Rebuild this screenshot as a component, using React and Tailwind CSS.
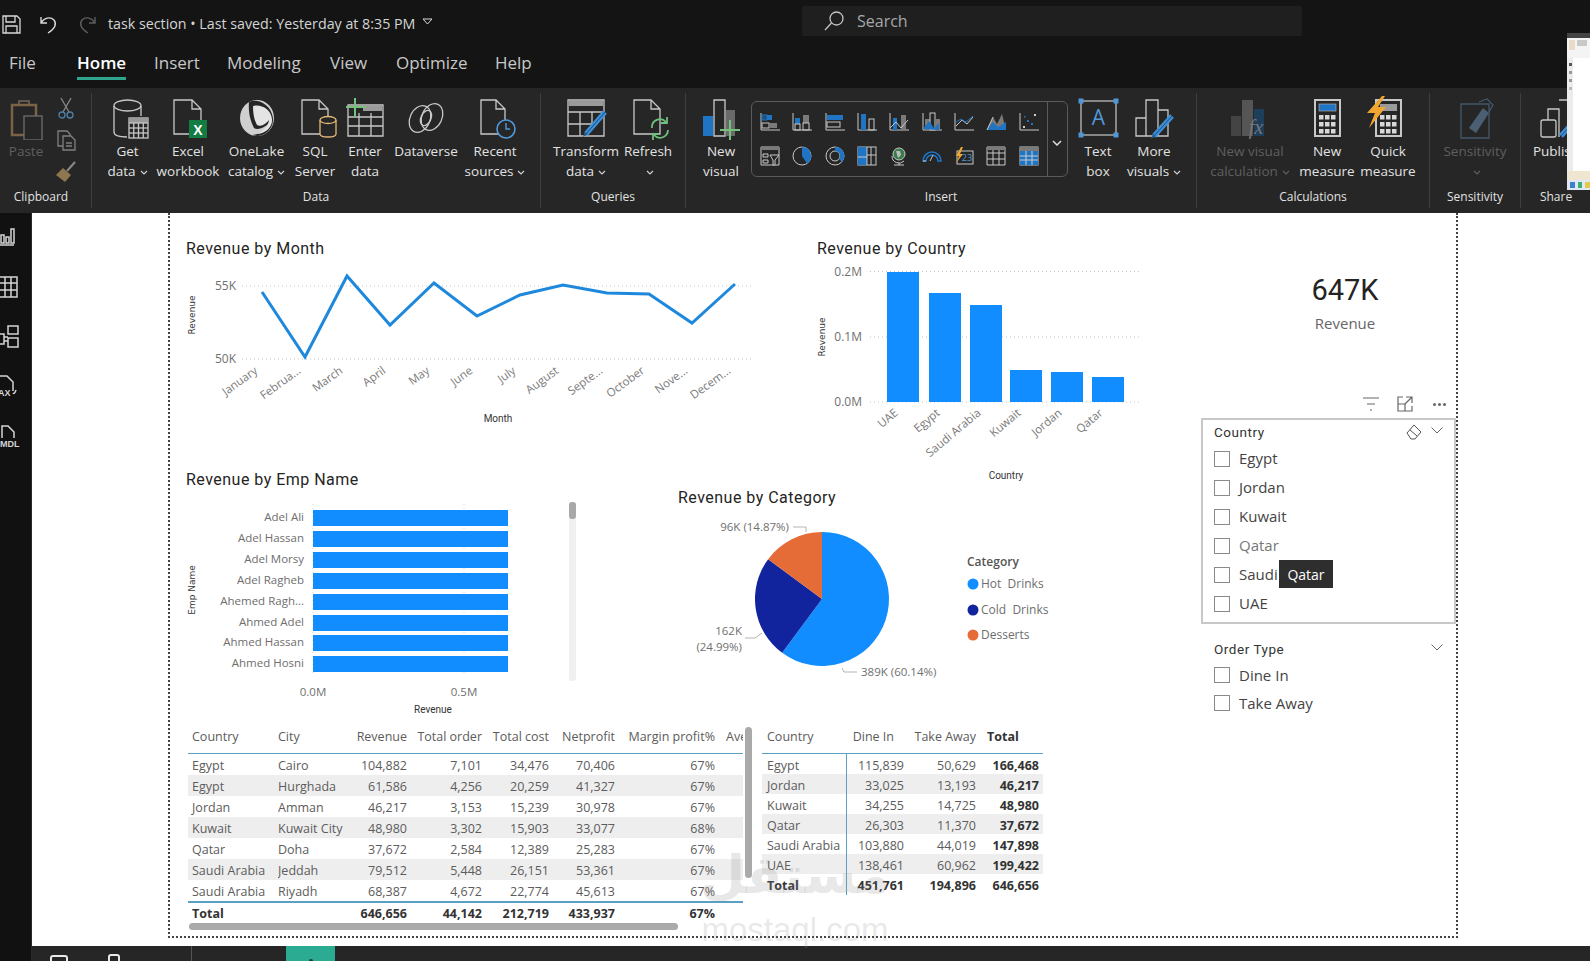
import React from "react";

const G = "#c8c8c8";
const SANS = "'Open Sans',sans-serif";
const DIN = "Roboto,sans-serif";

const Ic = ({ children, s = 44, vb, sw = 1.3, stroke = G, className = "" }) => (
  <svg width={s} height={s} viewBox={vb || `0 0 ${s} ${s}`} fill="none" stroke={stroke} strokeWidth={sw} className={"shrink-0 " + className}>
    {children}
  </svg>
);

const CalcGrid = ({ x, y, w, h, c = 4, r = 4 }) => (
  <g>
    <rect x={x} y={y} width={w} height={h} fill="#262626" />
    <rect x={x} y={y} width={w} height={h / r} fill="#9a9a9a" stroke="none" />
    {Array.from({ length: c - 1 }).map((_, i) => (
      <path key={i} d={`M${x + ((i + 1) * w) / c} ${y + h / r}V${y + h}`} />
    ))}
    {Array.from({ length: r - 1 }).map((_, i) => (
      <path key={i} d={`M${x} ${y + ((i + 1) * h) / r}H${x + w}`} />
    ))}
  </g>
);

const DocP = ({ x, y, w, h, f = 9, stroke = G }) => (
  <path stroke={stroke} d={`M${x} ${y}h${w - f}l${f} ${f}v${h - f}h${-w}z M${x + w - f} ${y}v${f}h${f}`} />
);

const Pencil = ({ x1, y1, x2, y2, color = "#3d8fd8" }) => (
  <g>
    <path d={`M${x1} ${y1}L${x2} ${y2}`} stroke={color} strokeWidth="5" />
    <path d={`M${x1} ${y1}L${x2} ${y2}`} stroke="#1b4f80" strokeWidth="1" />
  </g>
);

const IPaste = () => (
  <Ic>
    <path d="M8 9h24v30H8z" stroke="#7b6443" strokeWidth="2.5" />
    <path d="M15 9V5h10v4" stroke="#77685a" strokeWidth="1.5" />
    <rect x="20" y="20" width="18" height="24" fill="#262626" stroke="#6e6e6e" />
  </Ic>
);
const ICut = () => (
  <Ic s={22} vb="0 0 22 22">
    <path d="M6 1l8 14M16 1L8 15" stroke="#8a8a8a" />
    <circle cx="7" cy="18" r="3" stroke="#4d7ea8" />
    <circle cx="15" cy="18" r="3" stroke="#4d7ea8" />
  </Ic>
);
const ICopy = () => (
  <Ic s={22} vb="0 0 22 22" stroke="#808080">
    <path d="M3 2h9l3 3v12H3z" />
    <path d="M8 7h8l4 4v10H8z" fill="#262626" />
    <path d="M11 14h6M11 17h6" />
  </Ic>
);
const IBrush = () => (
  <Ic s={22} vb="0 0 22 22">
    <path d="M20 1L12 10" stroke="#8a8a8a" strokeWidth="2" />
    <path d="M8 7l8 7-6 7-9-7z" fill="#8d7650" stroke="none" />
  </Ic>
);

const IGet = () => (
  <Ic>
    <path d="M8 10v26c0 3 5 5 13 5M35 10v10" />
    <ellipse cx="21.5" cy="9.5" rx="13.5" ry="5.5" />
    <CalcGrid x={23} y={22} w={19} h={20} />
  </Ic>
);
const IExcel = () => (
  <Ic>
    <DocP x={8} y={4} w={27} h={34} />
    <rect x="23" y="24" width="18" height="18" fill="#127c43" stroke="none" />
    <text x="32" y="38.5" textAnchor="middle" fill="#fff" stroke="none" fontSize="14" fontWeight="700" fontFamily="Liberation Sans">X</text>
  </Ic>
);
const IOneLake = () => (
  <Ic>
    <ellipse cx="22" cy="22" rx="17" ry="18" fill="#cfcfcf" stroke="none" />
    <path d="M14 6c8-4 22 2 24 16 1 12-11 21-21 17 8-1 14-4 18-13-6 7-13 8-16 6-3-6-6-14-5-26z" fill="#262626" stroke="none" />
    <path d="M18 10c8-2 18 3 19 13 1 9-8 15-15 15 6-3 11-7 12-14-4 5-9 7-12 5-3-5-4-12-4-19z" fill="#e4e4e4" stroke="none" />
  </Ic>
);
const ISql = () => (
  <Ic>
    <DocP x={9} y={4} w={26} h={34} />
    <path d="M27 24v14c0 2 3 3 8 3s8-1 8-3V24" fill="#262626" stroke="#e6b877" />
    <ellipse cx="35" cy="24" rx="8" ry="3.5" fill="#262626" stroke="#e6b877" />
  </Ic>
);
const IEnter = () => (
  <Ic>
    <path d="M5 9h35v31H5zM5 21h35M5 30h35M16 17v23M28 17v23" />
    <rect x="20" y="10" width="19" height="5" fill="#9a9a9a" stroke="none" />
    <path d="M12 2v19M3 11h20" stroke="#74c27c" strokeWidth="2" />
  </Ic>
);
const IDataverse = () => (
  <Ic>
    <ellipse cx="16" cy="23" rx="10" ry="14" transform="rotate(25 16 23)" />
    <ellipse cx="28" cy="21" rx="10" ry="14" transform="rotate(25 28 21)" />
    <ellipse cx="22" cy="22" rx="5" ry="8" transform="rotate(25 22 22)" />
  </Ic>
);
const IRecent = () => (
  <Ic>
    <DocP x={8} y={4} w={24} h={34} />
    <circle cx="33" cy="33" r="9" fill="#262626" stroke="#4f98d8" strokeWidth="1.6" />
    <path d="M33 27v6h4" stroke="#4f98d8" strokeWidth="1.4" />
  </Ic>
);
const ITransform = () => (
  <Ic>
    <path d="M4 4h36v36H4zM4 16h36M4 28h24M16 16v24M28 16v14" />
    <rect x="5" y="5" width="34" height="5" fill="#9a9a9a" stroke="none" />
    <Pencil x1={41} y1={16} x2={22} y2={38} />
    <path d="M19 41l2-5 3 2z" fill="#1f5f9c" stroke="none" />
  </Ic>
);
const IRefresh = () => (
  <Ic>
    <DocP x={8} y={4} w={26} h={34} />
    <path d="M26 32a8 8 0 0 1 14-6m2 8a8 8 0 0 1-14 5" stroke="#6ec17c" strokeWidth="1.8" fill="none" />
    <path d="M41 21v6h-6M27 44v-6h6" stroke="#6ec17c" strokeWidth="1.8" />
  </Ic>
);
const INewVisual = () => (
  <Ic>
    <rect x="4" y="20" width="10" height="20" fill="#1f74c4" stroke="none" />
    <path d="M15 4h11v36H15z" />
    <rect x="27" y="14" width="9" height="26" fill="#6a6a6a" stroke="none" />
    <path d="M31 24v20M21 34h20" stroke="#74c27c" strokeWidth="2" />
  </Ic>
);
const ITextBox = () => (
  <Ic>
    <rect x="5" y="5" width="35" height="34" strokeWidth="1.2" />
    {[[5, 5], [40, 5], [5, 39], [40, 39]].map(([x, y]) => (
      <rect key={x + "" + y} x={x - 2.5} y={y - 2.5} width="5" height="5" fill="#4f98d8" stroke="none" />
    ))}
    <text x="22.5" y="29" textAnchor="middle" fill="#4f98d8" stroke="none" fontSize="21" fontFamily="Open Sans">A</text>
  </Ic>
);
const IMore = () => (
  <Ic>
    <path d="M4 22h10v18H4zM14 4h12v36H14zM26 14h10v26H26z" />
    <Pencil x1={40} y1={20} x2={22} y2={40} />
    <path d="M19 43l2-5 3 2z" fill="#1f5f9c" stroke="none" />
  </Ic>
);
const IFx = () => (
  <Ic>
    <rect x="3" y="20" width="10" height="20" fill="#444" stroke="none" />
    <rect x="14" y="4" width="11" height="36" fill="#555" stroke="none" />
    <rect x="26" y="13" width="10" height="27" fill="#1e3f5c" stroke="none" />
    <text x="28" y="38" textAnchor="middle" fill="#777" stroke="none" fontSize="20" fontStyle="italic" fontFamily="Liberation Serif">fx</text>
  </Ic>
);
const Calc = ({ bolt }) => (
  <Ic>
    <rect x="10" y="4" width="25" height="36" strokeWidth="2" />
    {bolt ? (
      <rect x="14" y="8" width="17" height="7" fill="#9a9a9a" stroke="none" />
    ) : (
      <rect x="14" y="8" width="17" height="7" fill="#1f74c4" stroke="#aaa" strokeWidth=".7" />
    )}
    {[19, 26, 33].map((y) =>
      [14, 20, 26].map((x) => <rect key={x + "," + y} x={x} y={y} width="4.5" height="4.5" fill="#d8d8d8" stroke="none" />)
    )}
    {bolt && <path d="M16 0L1 17h8L3 32 20 11h-8l7-11z" fill="#f0a732" stroke="none" />}
  </Ic>
);
const ISens = () => (
  <Ic stroke="#44586b">
    <path d="M8 8h28v34H8z" />
    <path d="M16 32l14-20 6 5-13 20z" fill="#4a5f72" stroke="none" />
    <path d="M26 6l8-3 6 6-4 7" />
  </Ic>
);
const IPublish = () => (
  <Ic>
    <rect x="7" y="24" width="15" height="17" rx="2" />
    <path d="M14 24V13h11v28M25 4h12v36" />
    <Pencil x1={43} y1={22} x2={27} y2={40} />
  </Ic>
);

const GI = ({ children }) => (
  <Ic s={20} sw={1} vb="0 0 20 20">
    {children}
  </Ic>
);
const BL = "#1f74c4";
const GY = "#7a7a7a";
const gallery = [
  <GI key="a"><path d="M1 1v17h19" /><rect x="2" y="3" width="5" height="5" stroke={BL} fill="#1f4d78" /><rect x="7" y="3" width="5" height="5" fill={BL} stroke="none" /><rect x="2" y="11" width="7" height="5" /><rect x="9" y="11" width="8" height="5" fill={GY} stroke="none" /></GI>,
  <GI key="b"><path d="M1 1v17h19" /><rect x="3" y="6" width="5" height="6" fill={BL} stroke="none" /><rect x="3" y="12" width="5" height="6" /><rect x="11" y="3" width="6" height="8" fill={GY} stroke="none" /><rect x="11" y="11" width="6" height="7" /></GI>,
  <GI key="c"><path d="M1 1v17h19" /><rect x="2" y="3" width="16" height="5" fill={BL} stroke="none" /><rect x="2" y="10" width="13" height="5" /></GI>,
  <GI key="d"><path d="M1 18h19M1 1v17" /><rect x="4" y="2" width="5" height="16" fill={BL} stroke="none" /><rect x="12" y="7" width="5" height="11" /></GI>,
  <GI key="e"><path d="M1 1v17h19" /><rect x="4" y="6" width="4" height="12" fill={BL} stroke="none" /><rect x="12" y="3" width="5" height="15" fill={GY} stroke="none" /><path d="M1 16l6-6 5 6 7-8" /></GI>,
  <GI key="f"><path d="M1 18h19M1 1v17" /><rect x="3" y="7" width="5" height="11" fill={GY} stroke="none" /><rect x="8" y="1" width="5" height="17" /><rect x="13" y="7" width="5" height="11" fill={GY} stroke="none" /><path d="M1 17l6-8 5 7 5-5v7z" fill={BL} stroke="none" /></GI>,
  <GI key="g"><path d="M1 1v17h19" /><path d="M2 14l6-6 5 4 6-7" /><path d="M2 10l5-3 5 3 7-6" stroke={BL} /></GI>,
  <GI key="h"><path d="M1 18l6-13 4 7 5-10 4 16z" fill={GY} stroke="none" /><path d="M1 18l6-8 5 5 8-5v8z" fill={BL} stroke="none" /><path d="M7 5l-6 13" /></GI>,
  <GI key="i"><path d="M1 1v17h19" /><g fill="#ccc" stroke="none"><rect x="4" y="14" width="2" height="2" /><rect x="15" y="2" width="2" height="2" /></g><g fill={BL} stroke="none"><rect x="8" y="8" width="2" height="2" /><rect x="12" y="11" width="2" height="2" /><rect x="5" y="4" width="1.5" height="1.5" /></g></GI>,
  <GI key="j"><path d="M1 1h18v18H1z" /><rect x="1" y="1" width="18" height="3" fill={GY} stroke="none" /><path d="M3 8h5v3H3zM3 14h5v3H3z" /><path d="M10 9h9l-4 5v5h-2v-5z" fill="#262626" /></GI>,
  <GI key="k"><circle cx="10" cy="10" r="9" /><path d="M10 1a9 9 0 0 1 5 16.5L10 10z" fill={BL} stroke="none" /></GI>,
  <GI key="l"><circle cx="10" cy="10" r="9" /><circle cx="10" cy="10" r="5" /><path d="M10 1a9 9 0 0 1 7 15l-3-3a5 5 0 0 0-4-8z" fill={BL} stroke="none" /></GI>,
  <GI key="m"><rect x="1" y="1" width="18" height="18" /><rect x="1" y="1" width="9" height="10" fill={BL} stroke="none" /><rect x="1" y="11" width="9" height="8" fill={BL} stroke="none" /><path d="M1 11h9M10 1v18M14 1v18M10 9h9" /></GI>,
  <GI key="n"><path d="M10 17v2M5 19h10M3 10a7 7 0 0 0 12 5" /><circle cx="10" cy="8" r="6" fill="#3a7d4a" /><path d="M7 5l4 0 1 4-3 3z" fill="#bbb" stroke="none" /></GI>,
  <GI key="o"><path d="M1 15a9 9 0 0 1 18 0h-3a6 6 0 0 0-12 0z" fill="none" stroke={BL} strokeWidth="1.6" /><path d="M8 15l3-6" /><path d="M1 15h3" /></GI>,
  <GI key="p"><rect x="3" y="5" width="16" height="13" /><path d="M7 1L2 10h3l-3 7 7-9H6l3-7z" fill="#f0a732" stroke="none" /><text x="13" y="15" textAnchor="middle" fontSize="9" fill="#4f98d8" stroke="none" fontFamily="Open Sans">23</text></GI>,
  <GI key="q"><path d="M1 1h18v18H1zM1 7h18M1 13h18M7 4v15M13 4v15" /><rect x="1" y="1" width="18" height="3" fill={GY} stroke="none" /></GI>,
  <GI key="r"><rect x="1" y="1" width="18" height="18" /><rect x="1" y="1" width="18" height="4" fill={GY} stroke="none" /><rect x="1" y="5" width="18" height="14" fill={BL} stroke="none" /><path d="M1 10h18M1 14h18M7 5v14M13 5v14" stroke="#ccc" /></GI>,
];

const Chev = ({ c = "#cfcfcf" }) => (
  <svg width="8" height="5" viewBox="0 0 8 5" fill="none" stroke={c} strokeWidth="1.2" className="inline-block ml-[4px] align-middle">
    <path d="M1 1l3 3 3-3" />
  </svg>
);

function Item({ className, icon, lines, chev, dim }) {
  return (
    <div className={"flex flex-col items-center shrink-0 pt-[8px] " + className}>
      <div className="h-[44px] flex items-center justify-center">{icon}</div>
      <div className={"mt-px text-[13.5px] leading-[20px] whitespace-nowrap flex flex-col items-center " + (dim ? "text-[#5f5f5f]" : "text-[#e2e2e2]")}>
        {lines.map((l, i) => (
          <div key={i} className="h-[20px]">
            {l}
            {chev && i === lines.length - 1 && <Chev c={dim ? "#5f5f5f" : "#cfcfcf"} />}
          </div>
        ))}
      </div>
    </div>
  );
}

function Group({ className, label, children, labelClass = "" }) {
  return (
    <div className={"flex flex-col shrink-0 h-[125px] " + className}>
      <div className="flex h-[96px]">{children}</div>
      <div className={"h-[26px] flex items-center justify-center text-[12px] text-[#e2e2e2] " + labelClass}>{label}</div>
    </div>
  );
}
const Sep = () => <div className="w-px my-[5px] bg-[#3e3e3e] shrink-0" />;

function Ribbon() {
  return (
    <div className="h-[125px] bg-[#262626] flex shrink-0 overflow-hidden">
      <Group className="w-[91px]" label="Clipboard" labelClass="pr-[9px]">
        <Item className="w-[52px]" icon={<IPaste />} lines={["Paste"]} dim />
        <div className="flex flex-col items-center pt-[9px] gap-[10px] w-[28px]">
          <ICut />
          <ICopy />
          <IBrush />
        </div>
      </Group>
      <Sep />
      <Group className="w-[448px]" label="Data">
        <Item className="w-[71px]" icon={<IGet />} lines={["Get", "data"]} chev />
        <Item className="w-[50px]" icon={<IExcel />} lines={["Excel", "workbook"]} />
        <Item className="w-[87px]" icon={<IOneLake />} lines={["OneLake", "catalog"]} chev />
        <Item className="w-[30px]" icon={<ISql />} lines={["SQL", "Server"]} />
        <Item className="w-[70px]" icon={<IEnter />} lines={["Enter", "data"]} />
        <Item className="w-[52px]" icon={<IDataverse />} lines={["Dataverse"]} />
        <Item className="w-[86px]" icon={<IRecent />} lines={["Recent", "sources"]} chev />
      </Group>
      <Sep />
      <Group className="w-[144px]" label="Queries">
        <Item className="w-[90px]" icon={<ITransform />} lines={["Transform", "data"]} chev />
        <Item className="w-[34px]" icon={<IRefresh />} lines={["Refresh", ""]} chev />
      </Group>
      <Sep />
      <Group className="w-[510px]" label="Insert">
        <Item className="w-[60px] ml-[5px]" icon={<INewVisual />} lines={["New", "visual"]} />
        <div className="mt-[13px] w-[317px] h-[76px] rounded-[6px] border border-[#5a5a5a] flex shrink-0">
          <div className="w-[295px] px-[2px] grid grid-cols-9 items-center justify-items-center py-[3px]">{gallery}</div>
          <div className="flex-1 border-l border-[#5a5a5a] flex items-center justify-center pt-[8px] pr-[2px]">
            <svg width="10" height="6" viewBox="0 0 10 6" fill="none" stroke="#ddd" strokeWidth="1.5"><path d="M1 1l4 4 4-4" /></svg>
          </div>
        </div>
        <Item className="w-[60px]" icon={<ITextBox />} lines={["Text", "box"]} />
        <Item className="w-[52px]" icon={<IMore />} lines={["More", "visuals"]} chev />
      </Group>
      <Sep />
      <Group className="w-[232px]" label="Calculations">
        <Item className="w-[106px]" icon={<IFx />} lines={["New visual", "calculation"]} chev dim />
        <Item className="w-[48px]" icon={<Calc />} lines={["New", "measure"]} />
        <Item className="w-[74px]" icon={<Calc bolt />} lines={["Quick", "measure"]} />
      </Group>
      <Sep />
      <Group className="w-[90px]" label="Sensitivity">
        <Item className="w-[90px]" icon={<ISens />} lines={["Sensitivity", ""]} chev dim />
      </Group>
      <Sep />
      <Group className="w-[70px]" label="Share">
        <Item className="w-[70px]" icon={<IPublish />} lines={["Publish"]} />
      </Group>
    </div>
  );
}

function TitleBar() {
  return (
    <div className="h-[48px] flex items-center shrink-0">
      <svg width="19" height="19" viewBox="0 0 19 19" fill="none" stroke="#d8d8d8" strokeWidth="1.3" className="ml-[2px]">
        <path d="M1 1h14l3 3v14H1zM4 1v6h9V1M4 18v-7h11v7" />
      </svg>
      <svg width="18" height="20" viewBox="0 0 18 20" fill="none" stroke="#d8d8d8" strokeWidth="1.4" className="ml-[19px]">
        <path d="M1 3v6h6M1 9c3-5 9-7 13-3 3 4 1 9-6 13" />
      </svg>
      <svg width="18" height="20" viewBox="0 0 18 20" fill="none" stroke="#5c5c5c" strokeWidth="1.4" className="ml-[20px]">
        <path d="M17 3v6h-6M17 9c-3-5-9-7-13-3-3 4-1 9 6 13" />
      </svg>
      <div className="ml-[12px] text-[14.25px] text-[#d4d4d4] whitespace-nowrap">task section • Last saved: Yesterday at 8:35 PM</div>
      <svg width="11" height="7" viewBox="0 0 11 7" fill="none" stroke="#d8d8d8" className="ml-[7px] mb-[6px]"><path d="M1 1h9L5.5 6z" /></svg>
      <div className="ml-auto mr-[288px] mb-[6px] w-[500px] h-[30px] bg-[#1f1f1f] rounded-[2px] flex items-center pl-[21px]">
        <svg width="22" height="22" viewBox="0 0 22 22" fill="none" stroke="#c4c4c4" strokeWidth="1.3">
          <circle cx="13.5" cy="8.5" r="6.5" /><path d="M8.5 13L2 20" />
        </svg>
        <span className="ml-[12px] text-[16px] text-[#a8a8a8]">Search</span>
      </div>
    </div>
  );
}

function Tabs() {
  const T = ({ w, children }) => <div className={"shrink-0 text-[17px] leading-[30px] text-[#c8c8c8] " + w}>{children}</div>;
  return (
    <div className="h-[40px] flex pl-[9px] shrink-0">
      <T w="w-[68px]">File</T>
      <div className="w-[77px] shrink-0">
        <div className="w-fit h-[32px] border-b-[3px] border-[#2fa48f] text-[17px] leading-[30px] font-semibold text-white">Home</div>
      </div>
      <T w="w-[73px]">Insert</T>
      <T w="w-[103px]">Modeling</T>
      <T w="w-[66px]">View</T>
      <T w="w-[99px]">Optimize</T>
      <T w="w-[60px]">Help</T>
    </div>
  );
}

function Rail() {
  const R = ({ children }) => (
    <svg width="20" height="24" viewBox="0 0 20 24" fill="none" stroke="#d4d4d4" strokeWidth="1.5" className="block">{children}</svg>
  );
  return (
    <div className="w-[32px] bg-[#111111] border-r border-[#2a2a2a] shrink-0 flex flex-col pt-[12px] gap-[26px]">
      <R><path d="M-2 20h16M1 10h3v8H1zM6 12h3v6H6zM11 4h3v14h-3z" /></R>
      <R><path d="M-2 2h19v20H-2zM-2 8h19M-2 15h19M5 2v20M11 2v20" /></R>
      <R><path d="M-2 9h6v10h-6zM8 1h10v8H8zM8 13h10v9H8zM4 12h4M4 16h4" /></R>
      <R>
        <path d="M-2 1h9l6 6v9M13 18c1 1 2 0 3-3" />
        <text x="-2" y="21" fontSize="9" fill="#d4d4d4" stroke="none" fontWeight="700" fontFamily="Liberation Sans">AX</text>
      </R>
      <R>
        <path d="M2 13V1h6l6 6v6" />
        <text x="0" y="22" fontSize="9" fill="#d4d4d4" stroke="none" fontWeight="700" fontFamily="Liberation Sans">MDL</text>
      </R>
    </div>
  );
}

const Title = ({ children, low }) => (
  <div className={"h-[20px] text-[16px] tracking-[0.03em] text-[#252423] whitespace-nowrap [font-family:Roboto,sans-serif] " + (low ? "leading-[22px]" : "leading-[20px]")}>{children}</div>
);

const Lbl = ({ x, y, a = "end", children, fs = 12, c = "#707070", rot, f = SANS, fw }) => (
  <text x={x} y={y + 1} textAnchor={a} fontSize={fs} fill={c} fontFamily={f} fontWeight={fw} dominantBaseline="middle" transform={rot ? `rotate(${rot} ${x} ${y})` : undefined}>
    {children}
  </text>
);
const Grid = ({ x1, x2, y }) => <path d={`M${x1} ${y}H${x2}`} stroke="#c4c4c4" strokeDasharray="1 3" />;

function MonthChart() {
  const pts = [[262, 292], [305, 357], [347, 276], [390, 325], [434, 283], [477, 316], [520, 295], [563, 285], [607, 293], [649, 294], [692, 323], [735, 284]];
  const names = ["January", "Februa...", "March", "April", "May", "June", "July", "August", "Septe...", "October", "Nove...", "Decem..."];
  return (
    <svg width="590" height="202" viewBox="186 258 590 202" className="block">
      <Grid x1={242} x2={753} y={286} />
      <Grid x1={242} x2={753} y={359} />
      <Lbl x={236} y={286}>55K</Lbl>
      <Lbl x={236} y={359}>50K</Lbl>
      <polyline points={pts.map((p) => p.join(",")).join(" ")} fill="none" stroke="#1e88dd" strokeWidth="3" strokeLinejoin="miter" />
      {names.map((n, i) => (
        <Lbl key={n} x={pts[i][0] - 6} y={369} rot={-36} fs={11.5} c="#7a7a7a">{n}</Lbl>
      ))}
      <Lbl x={191} y={315} a="middle" rot={-90} fs={9} c="#333" f="DejaVu Sans">Revenue</Lbl>
      <Lbl x={498} y={418} a="middle" fs={10} c="#333" f={DIN}>Month</Lbl>
    </svg>
  );
}

function CountryChart() {
  const bars = [[887, 272], [929, 293], [970, 305], [1010, 370], [1051, 372], [1092, 377]];
  const names = ["UAE", "Egypt", "Saudi Arabia", "Kuwait", "Jordan", "Qatar"];
  return (
    <svg width="340" height="225" viewBox="817 258 340 225" className="block">
      <Grid x1={870} x2={1142} y={271.5} />
      <Grid x1={870} x2={1142} y={337} />
      <Grid x1={870} x2={1142} y={402} />
      <Lbl x={862} y={272}>0.2M</Lbl>
      <Lbl x={862} y={337}>0.1M</Lbl>
      <Lbl x={862} y={402}>0.0M</Lbl>
      {bars.map(([x, y]) => (
        <rect key={x} x={x} y={y} width="32" height={402 - y} fill="#118DFF" />
      ))}
      {names.map((n, i) => (
        <Lbl key={n} x={bars[i][0] + 9} y={411} rot={-40} fs={11.5} c="#7a7a7a">{n}</Lbl>
      ))}
      <Lbl x={821} y={337} a="middle" rot={-90} fs={9} c="#333" f="DejaVu Sans">Revenue</Lbl>
      <Lbl x={1006} y={475} a="middle" fs={10} c="#333" f={DIN}>Country</Lbl>
    </svg>
  );
}

function EmpChart() {
  const rows = [["Adel Ali", 510], ["Adel Hassan", 531], ["Adel Morsy", 552], ["Adel Ragheb", 573], ["Ahemed Ragh...", 594], ["Ahmed Adel", 615], ["Ahmed Hassan", 635], ["Ahmed Hosni", 656]];
  return (
    <svg width="400" height="225" viewBox="186 490 400 225" className="block">
      <path d="M313 504v172M464 504v172" stroke="#d5d5d5" strokeDasharray="1 3" />
      {rows.map(([n, y]) => (
        <g key={n}>
          <Lbl x={304} y={y + 7} fs={11.5} c="#6e6e6e">{n}</Lbl>
          <rect x="313" y={y} width="195" height="16" fill="#118DFF" />
        </g>
      ))}
      <Lbl x={313} y={692} a="middle" fs={11.5}>0.0M</Lbl>
      <Lbl x={464} y={692} a="middle" fs={11.5}>0.5M</Lbl>
      <Lbl x={433} y={709} a="middle" fs={10} c="#333" f={DIN}>Revenue</Lbl>
      <Lbl x={191} y={590} a="middle" rot={-90} fs={9} c="#333" f="DejaVu Sans">Emp Name</Lbl>
      <rect x="569" y="502" width="7" height="179" rx="3" fill="#f0f0f0" />
      <rect x="569" y="502" width="7" height="17" rx="3" fill="#a8a8a8" />
    </svg>
  );
}

function CategoryChart() {
  const cx = 822, cy = 599, r = 67;
  const pt = (f) => [cx + r * Math.sin(f * 2 * Math.PI), cy - r * Math.cos(f * 2 * Math.PI)];
  const slice = (a, b, c) => {
    const [x1, y1] = pt(a);
    const [x2, y2] = pt(b);
    return <path key={c} d={`M${cx} ${cy}L${x1} ${y1}A${r} ${r} 0 ${b - a > 0.5 ? 1 : 0} 1 ${x2} ${y2}Z`} fill={c} />;
  };
  return (
    <svg width="512" height="205" viewBox="678 508 512 205" className="block">
      {slice(0, 0.6014, "#118DFF")}
      {slice(0.6014, 0.8513, "#12239E")}
      {slice(0.8513, 1, "#E66C37")}
      <path d="M793 527h13v5M745 638h10l7-5M842 668l2 4h13" stroke="#b5b5b5" fill="none" />
      <Lbl x={789} y={527} fs={11.5}>96K (14.87%)</Lbl>
      <Lbl x={742} y={631} fs={11.5}>162K</Lbl>
      <Lbl x={742} y={647} fs={11.5}>(24.99%)</Lbl>
      <Lbl x={861} y={672} a="start" fs={11.5}>389K (60.14%)</Lbl>
      <Lbl x={967} y={562} a="start" fs={12} c="#555" fw={600}>Category</Lbl>
      {[["Hot  Drinks", 584, "#118DFF"], ["Cold  Drinks", 610, "#12239E"], ["Desserts", 635, "#E66C37"]].map(([n, y, c]) => (
        <g key={n}>
          <circle cx="973" cy={y} r="5.5" fill={c} />
          <text x="981" y={y + 1} fontSize="12" fill="#6e6e6e" fontFamily={SANS} dominantBaseline="middle" xmlSpace="preserve">{n}</text>
        </g>
      ))}
    </svg>
  );
}

const tableCols = [
  "w-[90px] pl-[4px] text-left",
  "w-[69px] text-left",
  "w-[60px] text-right",
  "w-[75px] text-right",
  "w-[67px] text-right",
  "w-[66px] text-right",
  "w-[100px] text-right",
  "w-[28px] pl-[11px] text-left",
];
const tableRows = [
  ["Egypt", "Cairo", "104,882", "7,101", "34,476", "70,406", "67%"],
  ["Egypt", "Hurghada", "61,586", "4,256", "20,259", "41,327", "67%"],
  ["Jordan", "Amman", "46,217", "3,153", "15,239", "30,978", "67%"],
  ["Kuwait", "Kuwait City", "48,980", "3,302", "15,903", "33,077", "68%"],
  ["Qatar", "Doha", "37,672", "2,584", "12,389", "25,283", "67%"],
  ["Saudi Arabia", "Jeddah", "79,512", "5,448", "26,151", "53,361", "67%"],
  ["Saudi Arabia", "Riyadh", "68,387", "4,672", "22,774", "45,613", "67%"],
];

const Cells = ({ cols, vals, className = "" }) => (
  <>
    {vals.map((v, i) => (
      <div key={i} className={"shrink-0 whitespace-nowrap overflow-hidden " + cols[i] + " " + className}>{v}</div>
    ))}
  </>
);

function DataTable() {
  return (
    <div className="w-[555px] text-[12.5px] text-[#5c5c5c] shrink-0">
      <div className="h-[39px] flex items-end pb-[6px] border-b border-[#5a9fc4] leading-[21px]">
        <Cells cols={tableCols} vals={["Country", "City", "Revenue", "Total order", "Total cost", "Netprofit", "Margin profit%", "Ave"]} />
      </div>
      {tableRows.map((r, i) => (
        <div key={i} className={"h-[21px] flex leading-[23px] " + (i % 2 === 1 ? "bg-[#eeeeee]" : "")}>
          <Cells cols={tableCols} vals={r} />
        </div>
      ))}
      <div className="h-[22px] flex border-t-2 border-[#5a9fc4] font-bold text-[#333333] leading-[21px]">
        <Cells cols={tableCols} vals={["Total", "", "646,656", "44,142", "212,719", "433,937", "67%"]} />
      </div>
      <div className="w-[489px] h-[7px] ml-px rounded-full bg-[#aaaaaa]" />
    </div>
  );
}

const mCols = [
  "w-[85px] pl-[5px] text-left border-r border-[#5a9fc4]",
  "w-[57px] text-right",
  "w-[72px] text-right",
  "w-[67px] pr-[4px] text-right font-bold text-[#333333]",
];
const mHead = [
  "w-[85px] pl-[5px] text-left",
  "w-[57px] pr-[10px] text-right",
  "w-[72px] text-right",
  "w-[67px] pl-[11px] text-left font-bold text-[#333333]",
];
const mRows = [
  ["Egypt", "115,839", "50,629", "166,468"],
  ["Jordan", "33,025", "13,193", "46,217"],
  ["Kuwait", "34,255", "14,725", "48,980"],
  ["Qatar", "26,303", "11,370", "37,672"],
  ["Saudi Arabia", "103,880", "44,019", "147,898"],
  ["UAE", "138,461", "60,962", "199,422"],
];
function Matrix() {
  return (
    <div className="w-[281px] ml-[10px] text-[12.5px] text-[#5c5c5c] shrink-0">
      <div className="h-[39px] flex items-end pb-[6px] border-b border-[#5a9fc4] leading-[21px]">
        <Cells cols={mHead} vals={["Country", "Dine In", "Take Away", "Total"]} />
      </div>
      {mRows.map((r, i) => (
        <div key={i} className={"h-[20px] flex leading-[23px] " + (i % 2 === 1 ? "bg-[#eeeeee]" : "")}>
          <Cells cols={mCols} vals={r} />
        </div>
      ))}
      <div className="h-[21px] flex font-bold text-[#333333] leading-[24px]">
        <Cells cols={mCols} vals={["Total", "451,761", "194,896", "646,656"]} />
      </div>
    </div>
  );
}

const Check = ({ label, dim }) => (
  <div className="h-[29px] flex items-center pl-[10px]">
    <div className="w-[16px] h-[16px] border border-[#8a8a8a] shrink-0 bg-white" />
    <span className={"ml-[9px] text-[15px] whitespace-nowrap " + (dim ? "text-[#777777]" : "text-[#444444]")}>{label}</span>
  </div>
);
const Vee = () => (
  <svg width="12" height="7" viewBox="0 0 12 7" fill="none" stroke="#666" strokeWidth="1"><path d="M.5.5L6 6 11.5.5" /></svg>
);

function RightColumn() {
  return (
    <div className="w-[266px] shrink-0 flex flex-col">
      <div className="ml-[62px] w-[186px] text-center pt-[61px]">
        <div className="text-[29px] leading-[32px] text-[#252423] [font-family:Roboto,sans-serif]">647K</div>
        <div className="mt-[5px] text-[15px] leading-[24px] text-[#666666]">Revenue</div>
      </div>
      <div className="mt-[59px] h-[20px] flex justify-end">
        <div className="w-[34px] flex items-center justify-center">
          <svg width="16" height="14" viewBox="0 0 16 14" fill="none" stroke="#666" strokeWidth="1.2"><path d="M0 1h16M4 7h8M7 13h2" /></svg>
        </div>
        <div className="w-[34px] flex items-center justify-center">
          <svg width="16" height="16" viewBox="0 0 16 16" fill="none" stroke="#666" strokeWidth="1.2"><path d="M6 1H1v14h14v-5M9 1h6v6M15 1L8 8" /><path d="M1 8h7v7" /></svg>
        </div>
        <div className="w-[34px] flex items-center justify-center gap-[2px]">
          <div className="w-[3px] h-[3px] rounded-full bg-[#666666]" />
          <div className="w-[3px] h-[3px] rounded-full bg-[#666666]" />
          <div className="w-[3px] h-[3px] rounded-full bg-[#666666]" />
        </div>
      </div>
      <div className="relative ml-[11px] mt-[4px] w-[255px] h-[206px] border-2 border-[#c8c8c8] bg-white">
        <div className="h-[24px] flex items-center pl-[11px] pr-[11px]">
          <span className="text-[13.5px] tracking-[0.04em] text-[#333333] [font-family:Roboto,sans-serif]">Country</span>
          <svg width="16" height="16" viewBox="0 0 16 16" fill="none" stroke="#555" strokeWidth="1" className="ml-auto"><path d="M8 1l7 7-6 7H5L1 9z M4 6l7 6" /></svg>
          <div className="ml-[9px] mb-[4px] flex"><Vee /></div>
        </div>
        <div className="pl-px">
          <Check label="Egypt" />
          <Check label="Jordan" />
          <Check label="Kuwait" />
          <Check label="Qatar" dim />
          <Check label="Saudi Arabia" />
          <Check label="UAE" />
        </div>
        <div className="absolute left-[76px] top-[140px] w-[54px] h-[28px] bg-[#2e2e2e] text-white text-[14px] flex items-center justify-center">Qatar</div>
      </div>
      <div className="mt-[14px] ml-[24px] w-[229px] h-[22px] flex items-center justify-between">
        <span className="text-[13.5px] tracking-[0.04em] text-[#333333] [font-family:Roboto,sans-serif]">Order Type</span>
        <div className="mb-[4px] flex"><Vee /></div>
      </div>
      <div className="ml-[14px] mt-px">
        <div className="[&>div]:h-[28px]">
          <Check label="Dine In" />
          <Check label="Take Away" />
        </div>
      </div>
    </div>
  );
}

function Canvas() {
  return (
    <div className="h-[733px] bg-white pl-[136px] shrink-0">
      <div className="relative w-[1290px] h-[725px] border-x-2 border-b-2 border-dotted border-[#444444] flex">
        <div className="w-[1020px] shrink-0 flex flex-col">
          <div className="h-[247px] flex pl-[16px] pt-[25px]">
            <div className="w-[631px] shrink-0"><Title low>Revenue by Month</Title><MonthChart /></div>
            <div className="w-[340px] shrink-0"><Title low>Revenue by Country</Title><CountryChart /></div>
          </div>
          <div className="h-[255px] flex pl-[16px]">
            <div className="w-[492px] shrink-0 pt-[10px]"><Title>Revenue by Emp Name</Title><EmpChart /></div>
            <div className="w-[512px] shrink-0 pt-[28px]"><Title>Revenue by Category</Title><CategoryChart /></div>
          </div>
          <div className="flex pl-[18px]">
            <DataTable />
            <div className="ml-[2px] mt-[12px] w-[7px] h-[151px] rounded-full bg-[#aaaaaa] shrink-0" />
            <Matrix />
          </div>
        </div>
        <RightColumn />
        <div className="absolute left-[525px] top-[636px] w-[200px] flex flex-col items-center pointer-events-none text-[rgba(140,140,140,0.2)] whitespace-nowrap">
          <div className="text-[52px] leading-[52px] font-bold [font-family:'DejaVu_Sans',sans-serif]" dir="rtl">مستقل</div>
          <div className="text-[33px] leading-[33px] mt-[12px] [font-family:'Liberation_Sans',sans-serif]">mostaql.com</div>
        </div>
      </div>
    </div>
  );
}

function BottomBar() {
  return (
    <div className="flex-1 bg-[#262626] flex overflow-hidden">
      <div className="ml-[18px] mt-[9px] w-[18px] h-[12px] rounded-t-[3px] border-2 border-[#e8e8e8] shrink-0" />
      <div className="ml-[40px] mt-[8px] w-[12px] h-[12px] rounded-t-[3px] border-2 border-[#e8e8e8] shrink-0" />
      <div className="ml-[71px] w-px bg-[#555555] shrink-0" />
      <div className="ml-[94px] w-[49px] bg-[#2aab92] shrink-0 flex justify-center">
        <div className="mt-[13px] w-[4px] h-[4px] rounded-full bg-[#123f36]" />
      </div>
    </div>
  );
}

function Thumb() {
  return (
    <div className="absolute left-[1567px] top-[33px] w-[23px] h-[157px] bg-white flex flex-col overflow-hidden">
      <div className="h-[5px] bg-[#444444] shrink-0" />
      <div className="h-[20px] bg-[#f4f4f4] shrink-0 flex gap-[2px] p-[2px]">
        <div className="w-[6px] h-[10px] bg-[#e8dcc8]" />
        <div className="w-[10px] h-[6px] bg-[#c8c8c8]" />
      </div>
      <div className="flex-1 flex">
        <div className="w-[6px] bg-[#ececec] flex flex-col items-center gap-[5px] pt-[5px]">
          <div className="w-[3px] h-[3px] bg-[#555555]" />
          <div className="w-[3px] h-[3px] bg-[#999999]" />
          <div className="w-[3px] h-[3px] bg-[#999999]" />
          <div className="w-[3px] h-[3px] bg-[#bbbbbb]" />
        </div>
      </div>
      <div className="h-[9px] bg-[#efe6cf] shrink-0" />
      <div className="h-[10px] bg-[#dfe9f5] shrink-0 flex items-center gap-[3px] pl-[3px]">
        <div className="w-[5px] h-[6px] bg-[#3f7fcf]" />
        <div className="w-[5px] h-[6px] bg-[#3faf6f]" />
        <div className="w-[5px] h-[6px] bg-[#e8c84a]" />
      </div>
    </div>
  );
}

export default function App() {
  return (
    <div className="relative w-[1590px] h-[961px] overflow-hidden bg-[#141414] flex flex-col [font-family:'Open_Sans',sans-serif]">
      <TitleBar />
      <Tabs />
      <Ribbon />
      <div className="flex-1 flex min-h-0">
        <Rail />
        <div className="flex-1 flex flex-col min-w-0">
          <Canvas />
          <BottomBar />
        </div>
      </div>
      <Thumb />
    </div>
  );
}
